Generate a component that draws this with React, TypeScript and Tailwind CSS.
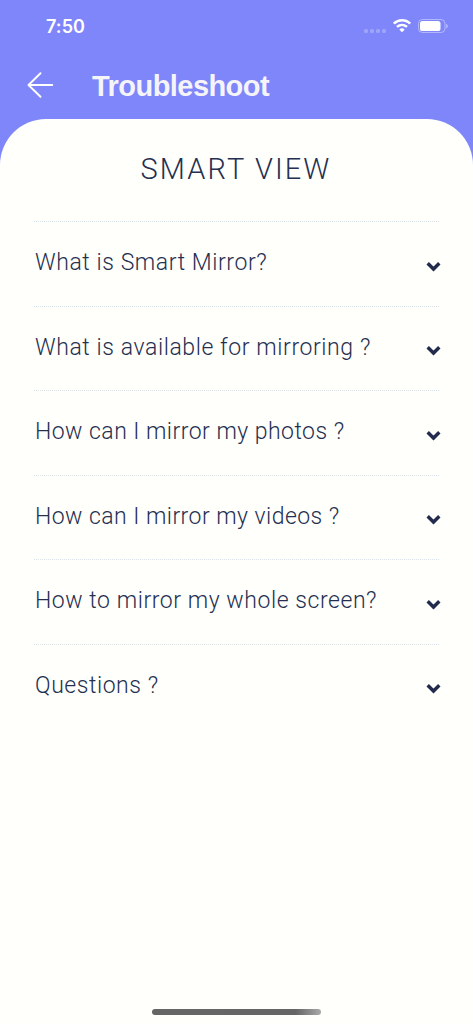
interface Question {
  title: string;
  tracking: string;
}

const questions: Question[] = [
  { title: 'What is Smart Mirror?', tracking: 'tracking-[0.58px]' },
  { title: 'What is available for mirroring ?', tracking: 'tracking-[0.59px]' },
  { title: 'How can I mirror my photos ?', tracking: 'tracking-[0.47px]' },
  { title: 'How can I mirror my videos ?', tracking: 'tracking-[0.46px]' },
  { title: 'How to mirror my whole screen?', tracking: 'tracking-[0.56px]' },
  { title: 'Questions ?', tracking: 'tracking-[0.55px]' },
];

function StatusBar() {
  return (
    <div className="flex h-[52px] items-center justify-between pl-[46px] pr-[25px] text-white">
      <span className="mt-[2px] font-['Inter',sans-serif] text-[18px] font-semibold leading-none tracking-[0.1px]">7:50</span>
      <div className="flex items-center">
        <div className="mr-[7px] mt-[9px] flex gap-[2px]">
          {[0, 1, 2, 3].map(i => (
            <span key={i} className="size-[4px] rounded-[1.5px] bg-white/25" />
          ))}
        </div>
        <svg width="18" height="14" viewBox="0 0 18 14" fill="currentColor">
          <path d="M9 0C5.6 0 2.5 1.3.2 3.4c-.2.2-.2.5 0 .7l1.1 1.1c.2.2.5.2.7 0A10.2 10.2 0 0 1 9 2.6c2.7 0 5.1 1 7 2.6.2.2.5.2.7 0l1.1-1.1c.2-.2.2-.5 0-.7A13 13 0 0 0 9 0Z" />
          <path d="M9 4.7c-2.1 0-4 .8-5.5 2.1-.2.2-.2.5 0 .7l1.1 1.1c.2.2.5.2.7 0a5.6 5.6 0 0 1 7.4 0c.2.2.5.2.7 0l1.1-1.1c.2-.2.2-.5 0-.7A8.2 8.2 0 0 0 9 4.7Z" />
          <path d="M9 9.3c-.9 0-1.7.3-2.3.9-.2.2-.2.5 0 .7l2 2.1c.2.2.4.2.6 0l2-2.1c.2-.2.2-.5 0-.7-.6-.6-1.4-.9-2.3-.9Z" />
        </svg>
        <svg className="ml-[7px]" width="30" height="14" viewBox="0 0 30 14">
          <rect x=".5" y=".5" width="26.5" height="13" rx="4" fill="none" stroke="#fff" strokeOpacity=".4" />
          <rect x="2" y="2" width="20.5" height="10" rx="2.6" fill="#fff" />
          <path d="M28.2 5v4.4c1-.3 1.6-1.2 1.6-2.2s-.6-1.9-1.6-2.2Z" fill="#fff" fillOpacity=".45" />
        </svg>
      </div>
    </div>
  );
}

function Header() {
  return (
    <header className="flex h-[67px] items-center pl-[27px]">
      <button aria-label="Back" className="-mt-[1px] text-white">
        <svg width="27" height="26" viewBox="0 0 27 26" fill="none" stroke="currentColor" strokeWidth="1.9" strokeLinecap="round" strokeLinejoin="round">
          <path d="M13.5 1.2 1.5 13l12 11.8M1.5 13h23.8" />
        </svg>
      </button>
      <h1 className="ml-[38px] mt-[1px] font-['Liberation_Sans',sans-serif] text-[29px] font-bold leading-none tracking-[-0.55px] text-[#f5f4f8]">Troubleshoot</h1>
    </header>
  );
}

function QuestionRow({ question }: { question: Question }) {
  return (
    <button className="flex h-[84.5px] w-full items-center justify-between border-t border-dotted border-[#d9e2e6] text-left">
      <span className={`-mt-[2px] ml-[1px] whitespace-nowrap text-[23px] font-light leading-none ${question.tracking}`}>{question.title}</span>
      <svg className="-mr-[2px] mt-[5px]" width="15" height="11" viewBox="0 0 15 11" fill="none" stroke="#222b4d" strokeWidth="3.4">
        <path d="m1.7 2.2 5.8 5.8 5.8-5.8" />
      </svg>
    </button>
  );
}

export default function App() {
  return (
    <div className="flex h-screen w-full flex-col overflow-hidden bg-[#7f86fa]">
      <StatusBar />
      <Header />
      <main className="flex flex-1 flex-col rounded-t-[46px] bg-[#fffffb] px-[34px] font-['Roboto',sans-serif] text-[#252f51]">
        <h2 className="flex h-[102px] items-center justify-center pb-[2px] pr-[1px] text-[29px] font-light leading-none tracking-[2.1px]">SMART VIEW</h2>
        <div>
          {questions.map(q => <QuestionRow key={q.title} question={q} />)}
        </div>
        <div className="mx-auto mb-[9px] mt-auto h-[6px] w-[169px] rounded-full bg-linear-to-r from-[#666] from-85% to-[#aaa]" />
      </main>
    </div>
  );
}
